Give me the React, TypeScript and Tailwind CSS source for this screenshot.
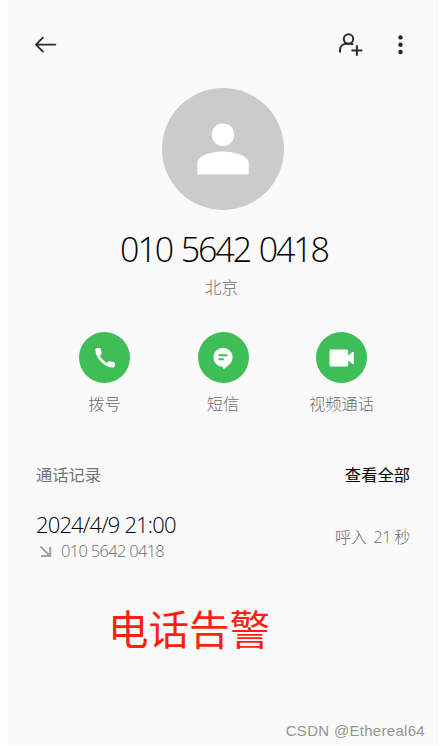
import React from "react";

const cjk = "font-['Noto_Sans_CJK_SC',sans-serif]";
const digits = "font-['Open_Sans','Noto_Sans_CJK_SC',sans-serif]";

function Action({ label, children }: { label: string; children: React.ReactNode }) {
  return (
    <button className="flex w-[118.5px] flex-col items-center">
      <span className="flex size-[51px] items-center justify-center rounded-full bg-[#3dbe57]">{children}</span>
      <span className={`${cjk} mt-2 text-[16.3px] leading-6 font-light text-[#6c6c6c]`}>{label}</span>
    </button>
  );
}

function Header() {
  return (
    <header className="flex h-[88px] items-center justify-between pr-[33px] pl-[27px]">
      <button aria-label="返回">
        <svg width="24" height="20" viewBox="0 0 24 20" fill="none" stroke="#2b2b2b" strokeWidth="1.9" strokeLinecap="round" strokeLinejoin="round">
          <path d="M21.3 10.6H2.2M8.9 3.7 2 10.6l6.9 7" />
        </svg>
      </button>
      <div className="flex items-center gap-[33px]">
        <button aria-label="添加联系人">
          <svg width="26" height="24" viewBox="0 0 26 24" fill="none" stroke="#2b2b2b" strokeWidth="2">
            <circle cx="11.5" cy="7" r="4.7" />
            <path d="M3 20.4v-2.3c0-4 2.900-6.300 6.700-6.300h3.600c1.200 0 2.100.2 3 .7M19.900 13.200v10.600M14.500 18.500h10.800" />
          </svg>
        </button>
        <button aria-label="更多">
          <svg width="10" height="24" viewBox="0 0 10 24" fill="#252525">
            <circle cx="4.5" cy="5.4" r="2.2" />
            <circle cx="4.5" cy="12.7" r="2.2" />
            <circle cx="4.5" cy="20" r="2.2" />
          </svg>
        </button>
      </div>
    </header>
  );
}

export default function App() {
  return (
    <div className="h-[746px] w-[440px] bg-white pr-px pb-px pl-[7px]">
      <main className="flex h-full flex-col bg-[#fafafa]">
        <Header />

        <section className="flex flex-col items-center">
          <div className="flex size-[122px] items-center justify-center rounded-full bg-[#cbcbcb]">
            <svg width="52" height="52" viewBox="0 0 52 52" fill="white">
              <circle cx="26" cy="11.7" r="11.3" />
              <path d="M.3 51.5V39.5C.3 33.5 13 28.5 26 28.5s25.7 5 25.7 11v12z" />
            </svg>
          </div>
          <h1 className={`${digits} mt-[17px] -mr-[2px] text-[34px] leading-[44px] font-light tracking-[-2.1px] [word-spacing:2px] whitespace-nowrap text-black`}>010 5642 0418</h1>
          <p className={`${cjk} mt-[4px] mr-[3px] text-[16.5px] leading-6 font-light text-[#6c6c6c]`}>北京</p>
        </section>

        <nav className="mt-[33px] flex justify-center">
          <Action label="拨号">
            <svg width="22" height="22" viewBox="0 0 22 22" fill="white">
              <path d="M2.600 1.200 5.400.900c.8-.1 1.200.3 1.400 1l.8 4.200c.1.600 0 1-.4 1.400L5.900 8.900c2 3.100 4.200 5.300 7 7.100l1.500-1.400c.4-.4.8-.5 1.400-.4l4.200 1.100c.7.200 1 .7.900 1.400l-.4 2.700c-.1.800-.6 1.200-1.400 1.200C10.500 20.200 1.700 11.500 1.300 2.700c0-.9.500-1.400 1.300-1.500z" />
            </svg>
          </Action>
          <Action label="短信">
            <svg width="22" height="24" viewBox="0 0 22 24" fill="none">
              <path fill="white" d="M11 1.800a9.600 9.600 0 1 1-9.600 9.600A9.600 9.600 0 0 1 11 1.800z" />
              <path fill="white" d="M10.900 19.500h5.300l-4 3.300c-.6.400-1.300 0-1.300-.7z" />
              <path stroke="#3dbe57" strokeWidth="2" d="M6.500 9.200h9M6.500 13.300h5.400" />
            </svg>
          </Action>
          <Action label="视频通话">
            <svg width="26" height="18" viewBox="0 0 26 18" fill="white">
              <path d="M2 .5h15.700c.9 0 1.500.6 1.500 1.500v4.600l4.300-3.700c.6-.5 1.300-.2 1.300.6v11c0 .8-.7 1.100-1.300.6l-4.300-3.700V16c0 .9-.6 1.500-1.500 1.500H2c-.9 0-1.500-.6-1.500-1.500V2C.5 1.100 1.100.5 2 .5z" />
            </svg>
          </Action>
        </nav>

        <section className="mt-[47px] pr-[29px] pl-[29px]">
          <div className={`${cjk} flex items-center justify-between text-[16.3px] leading-6`}>
            <h2 className="font-normal text-[#747474]">通话记录</h2>
            <button className="font-normal text-black">查看全部</button>
          </div>
          <div className="mt-[24px] flex items-center justify-between">
            <div>
              <p className={`${digits} text-[22px] leading-7 font-light tracking-[-0.85px] whitespace-nowrap text-black`}>2024/4/9 21:00</p>
              <div className="flex h-[26px] items-center">
                <svg className="mr-[9px] ml-[3px]" width="13" height="13" viewBox="0 0 13 13" fill="none" stroke="#a2a2a2" strokeWidth="2">
                  <path d="m1.500 1.500 9 9M11.200 2v9H2" />
                </svg>
                <span className={`${digits} text-[16.500px] font-light tracking-[-0.7px] whitespace-nowrap text-[#6c6c6c]`}>010 5642 0418</span>
              </div>
            </div>
            <p className={`${digits} text-[16.300px] leading-6 font-light tracking-[-0.65px] whitespace-pre text-[#6c6c6c]`}>呼入  21 秒</p>
          </div>
        </section>

        <p className={`${cjk} mt-[36px] ml-[101px] text-[40.5px] leading-[56px] font-normal text-[#ff1e10]`}>电话告警</p>

        <footer className="mt-auto pr-[14px] pb-[2px] text-right font-['Liberation_Sans',sans-serif] text-[15px] leading-6 tracking-[0.3px] text-[#949494]">
          CSDN @Ethereal64
        </footer>
      </main>
    </div>
  );
}
